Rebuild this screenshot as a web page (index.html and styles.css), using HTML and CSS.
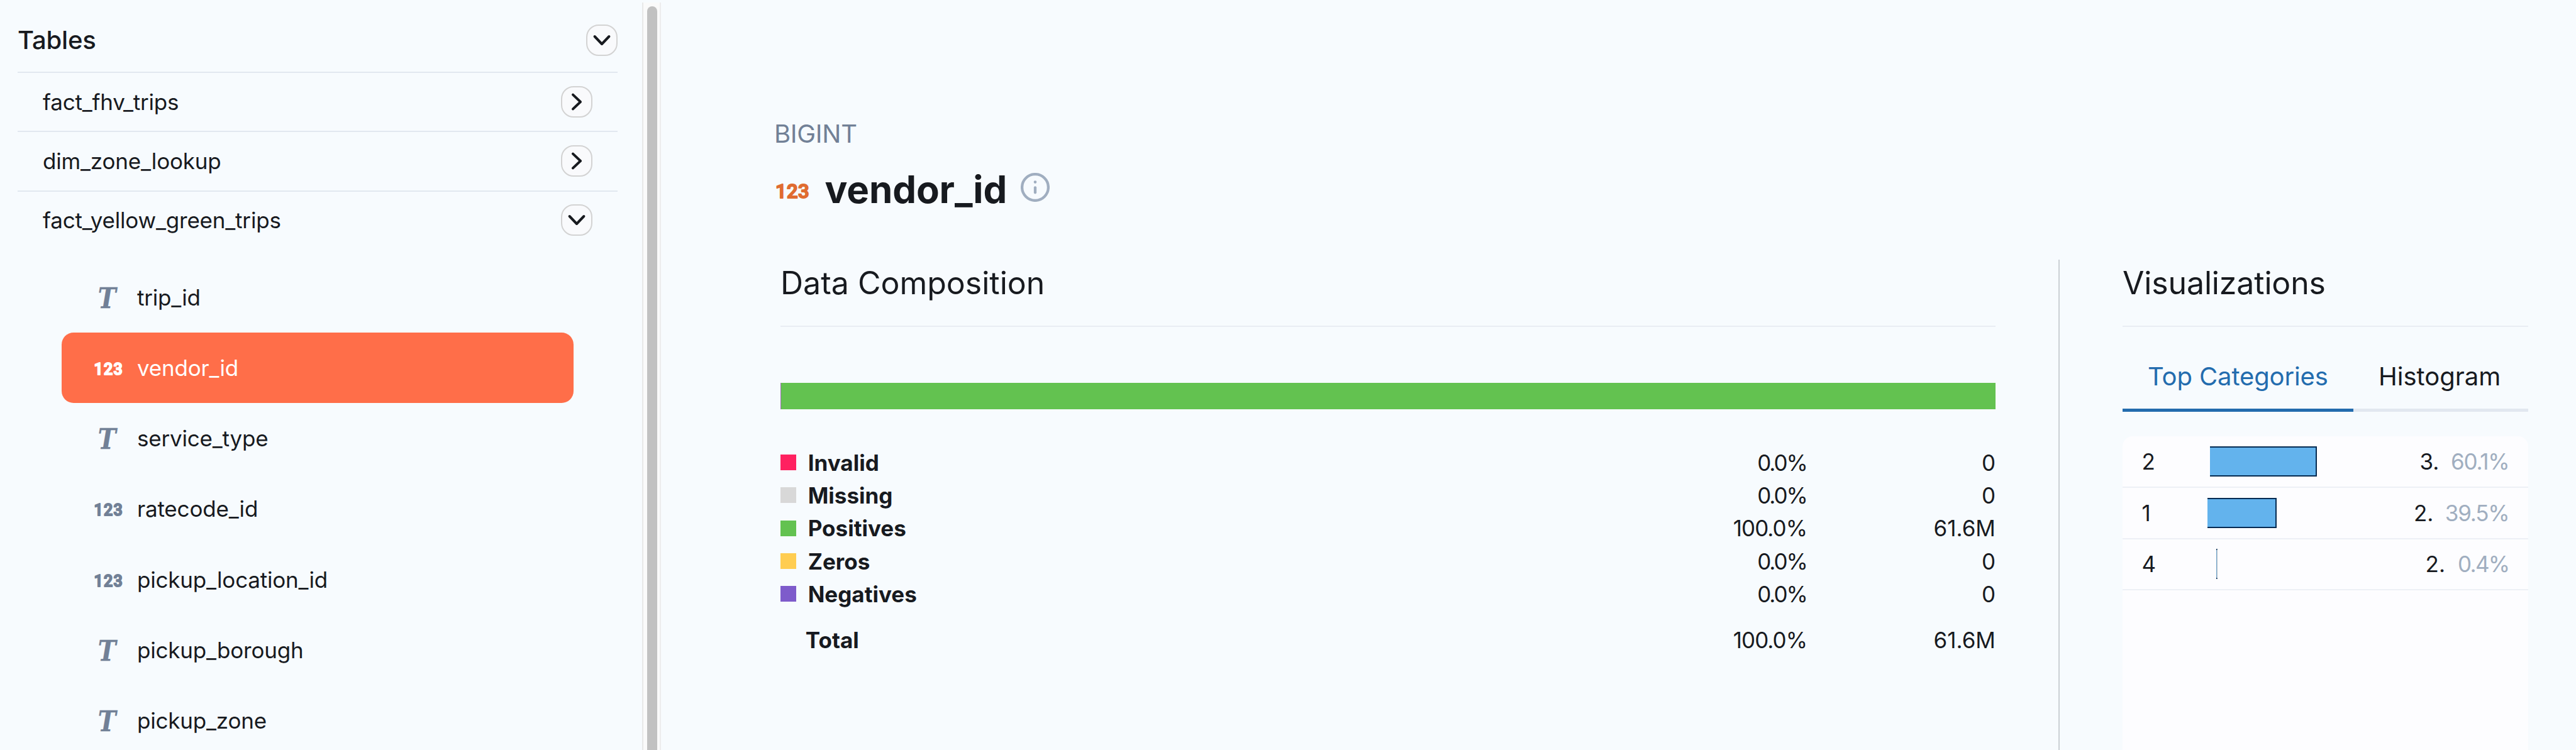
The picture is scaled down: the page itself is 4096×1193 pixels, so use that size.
FILE: index.html
```html
<!DOCTYPE html>
<html lang="en">
<head>
<meta charset="utf-8">
<title>vendor_id</title>
<link rel="stylesheet" href="styles.css">
</head>
<body>
<svg class="defs" width="0" height="0" aria-hidden="true">
  <symbol id="down" viewBox="-25 -25 50 50"><path d="M-11.4-6 0 6 11.4-6"/></symbol>
  <symbol id="right" viewBox="-25 -25 50 50"><path d="M-6-11.4 6 0-6 11.4"/></symbol>
</svg>
<div class="app">
  <aside class="sidebar">
    <div class="tables-head"><h2 class="tables-title">Tables</h2><button class="toggle"><svg><use href="#down"/></svg></button></div>
    <div class="table-row"><span>fact_fhv_trips</span><button class="toggle"><svg><use href="#right"/></svg></button></div>
    <div class="table-row"><span>dim_zone_lookup</span><button class="toggle"><svg><use href="#right"/></svg></button></div>
    <div class="table-row last"><span>fact_yellow_green_trips</span><button class="toggle"><svg><use href="#down"/></svg></button></div>
    <ul class="columns">
      <li class="column"><svg class="type"><text class="t" transform="translate(5.7 47.3) scale(.86 1)">T</text></svg><span>trip_id</span></li>
      <li class="column active"><svg class="type"><text class="n" x="-.6" y="40.9">123</text></svg><span>vendor_id</span></li>
      <li class="column"><svg class="type"><text class="t" transform="translate(5.7 47.3) scale(.86 1)">T</text></svg><span>service_type</span></li>
      <li class="column"><svg class="type"><text class="n" x="-.6" y="40.9">123</text></svg><span>ratecode_id</span></li>
      <li class="column"><svg class="type"><text class="n" x="-.6" y="40.9">123</text></svg><span>pickup_location_id</span></li>
      <li class="column"><svg class="type"><text class="t" transform="translate(5.7 47.3) scale(.86 1)">T</text></svg><span>pickup_borough</span></li>
      <li class="column"><svg class="type"><text class="t" transform="translate(5.7 47.3) scale(.86 1)">T</text></svg><span>pickup_zone</span></li>
    </ul>
  </aside>
  <div class="scrollbar"><div class="thumb"></div></div>
  <main class="main">
    <p class="dtype">BIGINT</p>
    <div class="title-row">
      <svg class="title-type"><text class="n" x="2" y="43.8">123</text></svg>
      <h1 class="title">vendor_id</h1>
      <svg class="info" viewBox="0 0 46 46"><circle cx="23" cy="23" r="20.9"/><path d="M23 23.3v8"/><circle class="dot" cx="23" cy="14.6" r="2.3"/></svg>
    </div>
    <div class="panels">
      <section class="composition">
        <h2 class="section-title">Data Composition</h2>
        <div class="stack"></div>
        <div class="legend">
          <div class="row"><i class="key invalid"></i><b>Invalid</b><span class="pct">0.0%</span><span class="num">0</span></div>
          <div class="row"><i class="key missing"></i><b>Missing</b><span class="pct">0.0%</span><span class="num">0</span></div>
          <div class="row"><i class="key positives"></i><b>Positives</b><span class="pct full">100.0%</span><span class="num">61.6M</span></div>
          <div class="row"><i class="key zeros"></i><b>Zeros</b><span class="pct">0.0%</span><span class="num">0</span></div>
          <div class="row"><i class="key negatives"></i><b>Negatives</b><span class="pct">0.0%</span><span class="num">0</span></div>
          <div class="row total"><b>Total</b><span class="pct full">100.0%</span><span class="num">61.6M</span></div>
        </div>
      </section>
      <section class="visuals">
        <h2 class="section-title">Visualizations</h2>
        <div class="tabs"><div class="tab selected">Top Categories</div><div class="tab">Histogram</div></div>
        <div class="card">
          <div class="cat"><span class="name">2</span><span class="bar first" style="width:170px"></span><span class="count">3.</span><span class="share">60.1%</span></div>
          <div class="cat"><span class="name">1</span><span class="bar second" style="width:110.6px"></span><span class="count">2.</span><span class="share">39.5%</span></div>
          <div class="cat"><span class="name">4</span><span class="bar third" style="width:2px"></span><span class="count">2.</span><span class="share">0.4%</span></div>
        </div>
      </section>
    </div>
  </main>
</div>
</body>
</html>
```
FILE: styles.css
```css
* { box-sizing: border-box; }
body, h1, h2, p, ul { margin: 0; padding: 0; }
h1, h2 { font-weight: inherit; font-size: inherit; }
body {
  background: #f7fbfe;
  color: #171a1f;
  font-family: Inter, sans-serif;
  font-size: 35px;
  overflow: hidden;
}
.defs { display: none; }
.app { display: flex; width: 4096px; height: 1193px; overflow: hidden; }

.sidebar { width: 1021px; padding-left: 28px; padding-right: 39px; flex: none; letter-spacing: -0.19px; }
.tables-head {
  display: flex; align-items: center; justify-content: space-between;
  height: 116px; padding-top: 13px;
  border-bottom: 2px solid #e2e8f0;
}
.tables-title { font-size: 40px; font-weight: 500; line-height: 50px; }
.table-row {
  display: flex; align-items: center; justify-content: space-between;
  height: 94.3px; padding: 0 40px;
  border-bottom: 2px solid #e2e8f0;
}
.table-row.last { border-bottom: 0; height: 91.5px; }
.toggle {
  width: 50px; height: 50px; padding: 0; border: 2px solid #d3d3d3;
  border-radius: 20px; background: #f9fafc;
  display: flex; align-items: center; justify-content: center;
}
.toggle svg { width: 50px; height: 50px; flex: none; fill: none; stroke: #171a1f; stroke-width: 4; stroke-linecap: round; stroke-linejoin: round; }
.columns { list-style: none; padding: 20.3px 70px 0 70px; }
.column {
  display: flex; align-items: center; gap: 18px;
  height: 112.25px; padding-left: 52px; border-radius: 19px;
}
.column.active { background: #ff6e49; color: #fff; }
.type { width: 50px; height: 60px; overflow: visible; flex: none; color: #718096; }
.active .type { color: #fff; }
.t { font-family: "DejaVu Serif", serif; font-weight: 700; font-style: italic; font-size: 45px; fill: currentColor; stroke: currentColor; stroke-width: .4; }
.n { font-family: Roboto, sans-serif; font-weight: 500; font-size: 25px; letter-spacing: 1.3px; fill: currentColor; stroke: currentColor; stroke-width: 2; stroke-linejoin: round; }

.scrollbar {
  width: 30px; height: 1189px; margin-top: 4px; padding: 6px 5px 0 6px; flex: none;
  background: #fafafa; border-left: 2px solid #e8e8e8; border-right: 2px solid #ededed;
}
.thumb { width: 16px; height: 1300px; border-radius: 8px; background: #c1c1c1; }

.main { flex: none; width: 3045px; padding-top: 188px; padding-left: 180px; }
.dtype { font-size: 40px; line-height: 50px; letter-spacing: -0.3px; color: #718096; }
.title-row { display: flex; align-items: center; height: 90px; margin-top: 18px; }
.title-type { width: 80.5px; height: 60px; overflow: visible; color: #e06c30; }
.title-type .n { font-size: 31px; letter-spacing: .4px; stroke-width: 2; }
.title { font-size: 60px; font-weight: 700; line-height: 80px; letter-spacing: -0.1px; }
.info { width: 46px; height: 46px; margin-left: 21.5px; margin-bottom: 6px; fill: none; stroke: #a0aec0; stroke-width: 4.3; stroke-linecap: round; }
.info .dot { fill: #a0aec0; stroke: none; }
.panels { display: flex; margin-top: 67px; height: 780px; }
.composition { width: 2044px; padding: 7px 100px 0 10px; border-right: 2px solid #cbd0d5; flex: none; }
.visuals { width: 745px; padding: 7px 0 0 100px; flex: none; }
.section-title { height: 100px; font-size: 50px; line-height: 60px; border-bottom: 2px solid #e9edf3; }
.visuals .section-title { letter-spacing: -0.15px; }
.stack { height: 42px; margin-top: 89px; background: #63c250; border-left: 1px solid #9a6fb0; }
.legend { margin-top: 58.4px; }
.row { display: flex; align-items: center; height: 52.35px; }
.key { width: 25px; height: 25px; margin-right: 18.7px; }
.row b { flex: 1; }
.pct { width: 200px; text-align: right; letter-spacing: -2px; }
.pct.full { letter-spacing: -1px; }
.num { width: 300px; text-align: right; }
.total { margin-top: 20.5px; padding-left: 39.8px; }
.invalid { background: #ff2160; }
.missing { background: #d8d8d8; }
.positives { background: #63c250; }
.zeros { background: #ffcd51; }
.negatives { background: #7e5bcb; }

.tabs { display: flex; margin-top: 30px; height: 104.5px; font-size: 40px; }
.tab { padding: 24px 0 0 40px; line-height: 50px; flex: 1; border-bottom: 5px solid #e2e8f0; }
.tab.selected { flex: none; width: 367px; color: #236cae; border-color: #236cae; letter-spacing: -0.12px; }
.card { margin-top: 39.5px; height: 520px; border-radius: 16px; background: #fdfdff; }
.cat { display: flex; align-items: center; height: 81.8px; padding: 0 30.5px; border-bottom: 2px solid #edf0f6; }
.name { width: 108px; }
.bar { height: 48px; background: #63b3ed; border: 2px solid #052b52; border-left: 0; }
.second { margin-left: -4px; }
.third { margin-left: 10px; background: #6fa3cb; border-right: 1px solid #b9c2cc; }
.count { margin-left: auto; }
.share { margin-left: 18.5px; color: #a0aec0; letter-spacing: -1.2px; }
.third ~ .share { margin-left: 20px; letter-spacing: -1.7px; }
```
